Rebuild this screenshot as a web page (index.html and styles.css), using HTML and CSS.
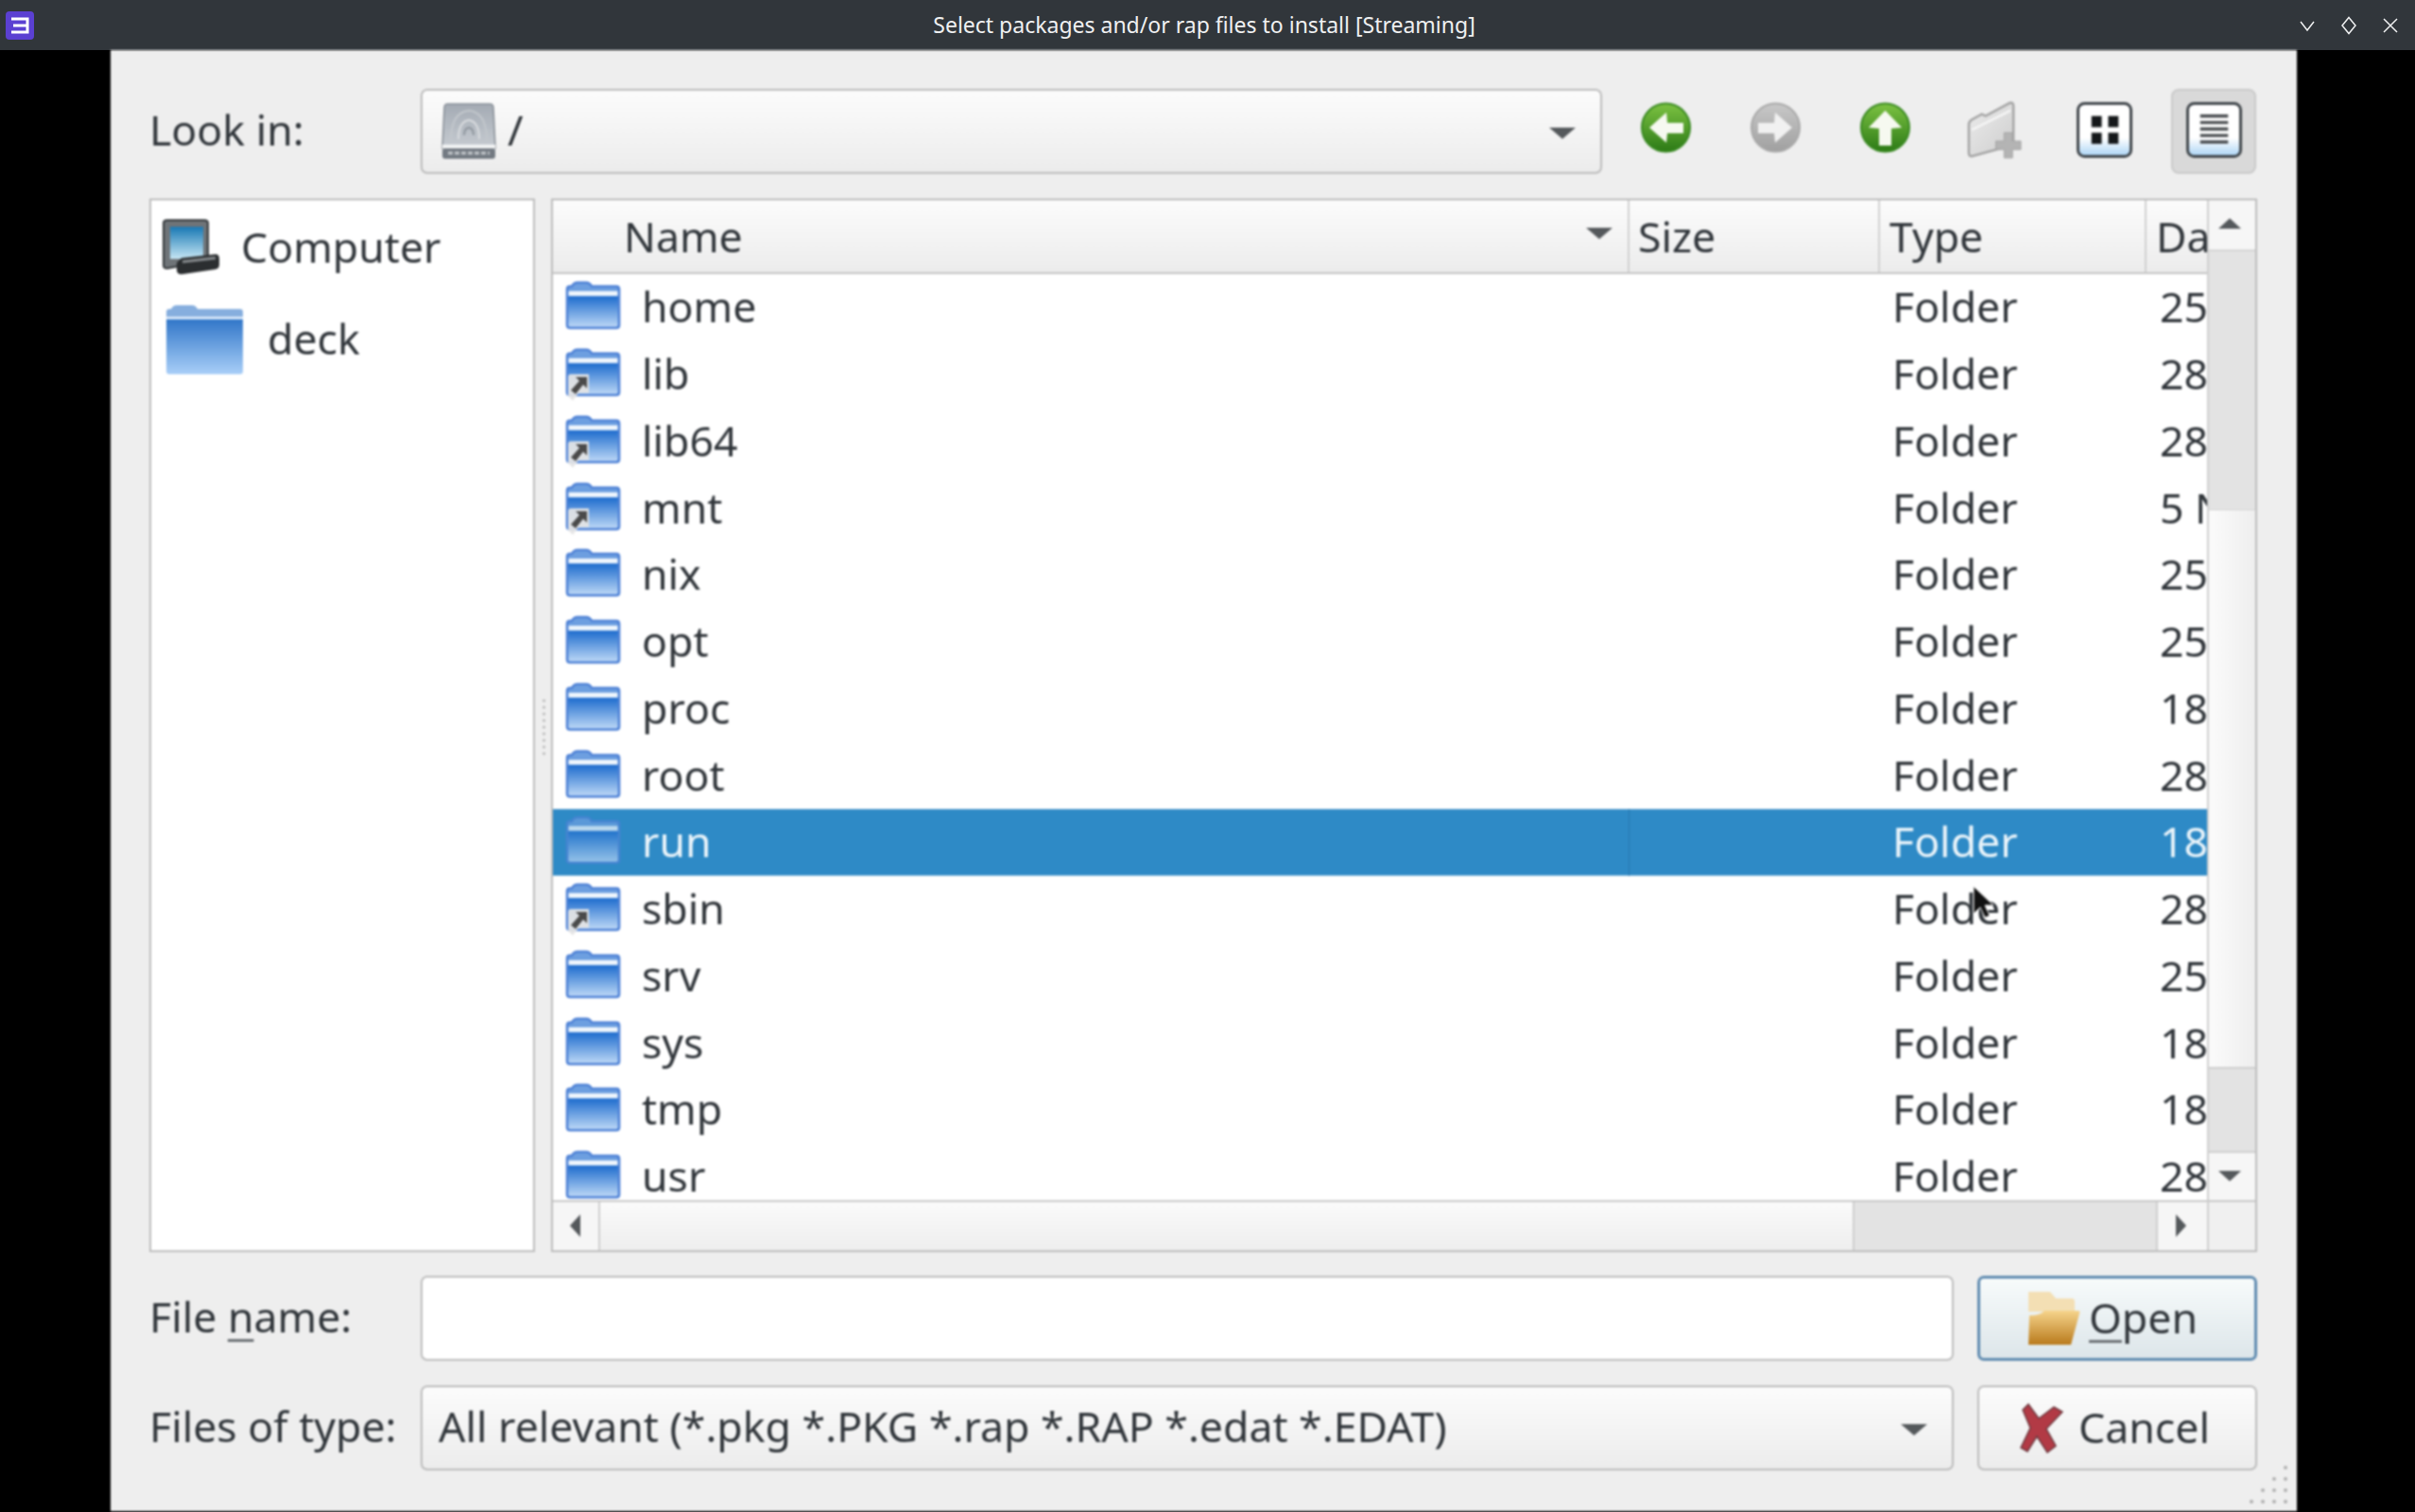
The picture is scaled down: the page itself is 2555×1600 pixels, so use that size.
FILE: index.html
```html
<!DOCTYPE html>
<html lang="en">

<head>
    <meta http-equiv="Content-Type" content="text/html; charset=utf-8" />
    <title>Select packages and/or rap files to install [Streaming]</title>
    <link rel="stylesheet" href="styles.css">
</head>

<body>
    <svg class="defs" width="0" height="0" aria-hidden="true">
        <defs>
            <linearGradient id="foldFill" x1="0" y1="0" x2="0" y2="1">
                <stop offset="0" stop-color="#6d9fe0" />
                <stop offset="0.3" stop-color="#6d9fe0" />
                <stop offset="0.31" stop-color="#1f6dce" />
                <stop offset="1" stop-color="#c0daf7" />
            </linearGradient>
            <linearGradient id="deckFill" x1="0" y1="0" x2="0" y2="1">
                <stop offset="0" stop-color="#86aede" />
                <stop offset="0.16" stop-color="#86aede" />
                <stop offset="0.17" stop-color="#d6e6f8" />
                <stop offset="0.2" stop-color="#d6e6f8" />
                <stop offset="0.21" stop-color="#3277c9" />
                <stop offset="1" stop-color="#a9cff8" />
            </linearGradient>
            <linearGradient id="greenFill" x1="0" y1="0" x2="0" y2="1">
                <stop offset="0" stop-color="#7cc242" />
                <stop offset="1" stop-color="#2c7a16" />
            </linearGradient>
            <linearGradient id="greyFill" x1="0" y1="0" x2="0" y2="1">
                <stop offset="0" stop-color="#c8c8c8" />
                <stop offset="1" stop-color="#a0a0a0" />
            </linearGradient>
            <linearGradient id="viewFill" x1="0" y1="0" x2="0" y2="1">
                <stop offset="0" stop-color="#ffffff" />
                <stop offset="0.65" stop-color="#ffffff" />
                <stop offset="1" stop-color="#a9d3f5" />
            </linearGradient>
            <linearGradient id="hddFill" x1="0" y1="0" x2="0" y2="1">
                <stop offset="0" stop-color="#a4abb4" />
                <stop offset="1" stop-color="#c6cbd1" />
            </linearGradient>
            <linearGradient id="screenFill" x1="0" y1="0" x2="0" y2="1">
                <stop offset="0" stop-color="#1878b4" />
                <stop offset="1" stop-color="#c6e6f4" />
            </linearGradient>
            <linearGradient id="newFolderFill" x1="0" y1="0" x2="1" y2="1">
                <stop offset="0" stop-color="#ececec" />
                <stop offset="1" stop-color="#cdcdcd" />
            </linearGradient>
            <linearGradient id="openFill" x1="0" y1="0" x2="0" y2="1">
                <stop offset="0" stop-color="#f6d48c" />
                <stop offset="1" stop-color="#b97a1c" />
            </linearGradient>
            <g id="folder">
                <path d="M2 8 Q2 5 5 5 H7 Q9 1 13 1 H22 Q26 1 28 5 H54 Q57 5 57 8 V46 Q57 49 54 49 H5 Q2 49 2 46 Z"
                    fill="url(#foldFill)" stroke="#4f82d6" stroke-width="2.6" />
                <rect x="3.5" y="10" width="52" height="5" fill="#eef5fc" />
            </g>
            <g id="linkBadge">
                <path d="M6 27 H25 V47 H14 L8 55 L3 50 V30 Q3 27 6 27 Z" fill="#e4e4e4" opacity="0.92" />
                <path d="M11 30 H23 V42 L19 38 L11 48 L6 44 L15 34 Z" fill="#4a4a4a" />
            </g>
        </defs>
    </svg>

    <div class="titlebar">
        <div class="titlebar-left">
            <svg class="appicon" viewBox="0 0 30 30">
                <rect width="30" height="30" rx="4" fill="#5b40d2" />
                <path d="M6 8 H23 V22 H6 M8 15 H23" fill="none" stroke="#fff" stroke-width="3" />
            </svg>
        </div>
        <div class="titletext">Select packages and/or rap files to install [Streaming]</div>
        <div class="winbtns">
            <svg viewBox="0 0 20 20"><path d="M3 6 L10 15 L17 6" /></svg>
            <svg viewBox="0 0 20 20"><path d="M10 1.5 L17 10 L10 18.5 L3 10 Z" /></svg>
            <svg viewBox="0 0 20 20"><path d="M3 3 L17 17 M17 3 L3 17" /></svg>
        </div>
    </div>

    <div class="stage">
        <div class="dialog">
            <div class="toprow">
                <label class="formlabel">Look in:</label>
                <div class="combo lookin">
                    <svg class="hdd" viewBox="0 0 58 60">
                        <path d="M7 1 H51 Q55 1 55 5 L57 48 H1 L3 5 Q3 1 7 1 Z" fill="url(#hddFill)" stroke="#878e96" stroke-width="1.5" />
                        <path d="M10 40 Q10 10 29 8 Q48 10 48 40" fill="none" stroke="#c2c7cc" stroke-width="2" />
                        <path d="M18 38 Q18 20 29 18 Q40 20 40 38" fill="none" stroke="#d8dbde" stroke-width="2" />
                        <path d="M24 34 Q24 27 29 26 Q34 27 34 34" fill="none" stroke="#8f969e" stroke-width="2" />
                        <rect x="1" y="44" width="56" height="4" fill="#f2f3f4" />
                        <rect x="1" y="48" width="56" height="11" rx="3" fill="#737a82" />
                        <path d="M7 53 H51" stroke="#c4c8cb" stroke-width="3" stroke-dasharray="5 2" />
                    </svg>
                    <span class="combotext">/</span>
                    <span class="arrow-down"></span>
                </div>
                <div class="toolbar">
                    <div class="toolbtn">
                        <svg viewBox="0 0 59 59">
                            <circle cx="29.5" cy="27" r="25.5" fill="url(#greenFill)" stroke="#3a8a22" stroke-width="2" />
                            <path d="M30 11 L12 27 L30 43 L31 33 H48 V22 H31 Z" fill="#f6f9f0" />
                        </svg>
                    </div>
                    <div class="toolbtn">
                        <svg viewBox="0 0 59 59">
                            <circle cx="29.5" cy="27" r="25.5" fill="url(#greyFill)" stroke="#a9a9a9" stroke-width="2" />
                            <path d="M29 11 L47 27 L29 43 L28 33 H11 V22 H28 Z" fill="#f1f1f1" />
                        </svg>
                    </div>
                    <div class="toolbtn">
                        <svg viewBox="0 0 59 59">
                            <circle cx="29.5" cy="27" r="25.5" fill="url(#greenFill)" stroke="#3a8a22" stroke-width="2" />
                            <path d="M29.5 9 L47 27 L36 28 V46 H23 V28 L12 27 Z" fill="#f6f9f0" />
                        </svg>
                    </div>
                    <div class="toolbtn">
                        <svg viewBox="0 0 60 60">
                            <path d="M2 24 Q2 21 5 19 L16 13 L20 15 L46 1 Q50 0 50 4 V44 L36 50 L6 58 Q2 59 2 55 Z" fill="url(#newFolderFill)" stroke="#a2a2a2" stroke-width="2.4" />
                            <path d="M5 30 L47 9" stroke="#f6f6f6" stroke-width="2.5" />
                            <path d="M40 33 H49 V42 H58 V51 H49 V60 H40 V51 H31 V42 H40 Z" fill="#b4b4b4" stroke="#a4a4a4" stroke-linejoin="round" />
                        </svg>
                    </div>
                    <div class="toolbtn">
                        <svg viewBox="0 0 60 60">
                            <rect x="1.5" y="1.5" width="57" height="57" rx="7" fill="url(#viewFill)" stroke="#3f454a" stroke-width="3" />
                            <rect x="16" y="15" width="11" height="12" fill="#15181a" />
                            <rect x="34" y="15" width="11" height="12" fill="#15181a" />
                            <rect x="16" y="33" width="11" height="12" fill="#15181a" />
                            <rect x="34" y="33" width="11" height="12" fill="#15181a" />
                        </svg>
                    </div>
                    <div class="toolbtn active">
                        <svg viewBox="0 0 60 60">
                            <rect x="1.5" y="1.5" width="57" height="57" rx="7" fill="url(#viewFill)" stroke="#3f454a" stroke-width="3" />
                            <path d="M15 15 H45 M15 22 H45 M15 29 H45 M15 36 H45 M15 43 H45" stroke="#4c4f52" stroke-width="3.4" />
                        </svg>
                    </div>
                </div>
            </div>

            <div class="middle">
                <div class="places pane">
                    <div class="place place-computer">
                        <svg class="computer" viewBox="0 0 60 60">
                            <path d="M1 4 Q1 1 5 1 H44 Q48 1 48 4 V44 L5 52 Q1 52 1 49 Z" fill="#6f7478" stroke="#33373a" stroke-width="2" />
                            <rect x="8" y="8" width="35" height="34" fill="url(#screenFill)" />
                            <path d="M15 46 L20 41 L56 37 Q60 37 60 42 V48 Q60 52 56 53 L22 58 Q15 59 15 54 Z" fill="#2b2e30" />
                            <path d="M21 45 L56 41" stroke="#85898c" stroke-width="3" />
                        </svg>
                        <span>Computer</span>
                    </div>
                    <div class="place place-deck">
                        <svg class="deck" viewBox="0 0 83 74">
                            <path d="M1 8 Q1 5 4 5 H6 Q8 1 12 1 H28 Q32 1 34 5 H79 Q82 5 82 8 V71 Q82 74 79 74 H4 Q1 74 1 71 Z" fill="url(#deckFill)" />
                        </svg>
                        <span>deck</span>
                    </div>
                </div>
                <div class="splitter"><span class="splitter-dots"></span></div>
                <div class="files pane">
                    <div class="filemain">
                        <div class="header">
                            <div class="hcell hname">Name<span class="sort-arrow"></span></div>
                            <div class="hcell hsize">Size</div>
                            <div class="hcell htype">Type</div>
                            <div class="hcell hdate">Da</div>
                        </div>
                        <div class="rows">
                            <div class="row"><div class="cname"><svg class="ficon" viewBox="0 0 59 51"><use href="#folder" /></svg>home</div><div class="csize"></div><div class="ctype">Folder</div><div class="cdate">25</div></div>
                            <div class="row"><div class="cname"><svg class="ficon" viewBox="0 0 59 51"><use href="#folder" /><use href="#linkBadge" /></svg>lib</div><div class="csize"></div><div class="ctype">Folder</div><div class="cdate">28</div></div>
                            <div class="row"><div class="cname"><svg class="ficon" viewBox="0 0 59 51"><use href="#folder" /><use href="#linkBadge" /></svg>lib64</div><div class="csize"></div><div class="ctype">Folder</div><div class="cdate">28</div></div>
                            <div class="row"><div class="cname"><svg class="ficon" viewBox="0 0 59 51"><use href="#folder" /><use href="#linkBadge" /></svg>mnt</div><div class="csize"></div><div class="ctype">Folder</div><div class="cdate">5 N</div></div>
                            <div class="row"><div class="cname"><svg class="ficon" viewBox="0 0 59 51"><use href="#folder" /></svg>nix</div><div class="csize"></div><div class="ctype">Folder</div><div class="cdate">25</div></div>
                            <div class="row"><div class="cname"><svg class="ficon" viewBox="0 0 59 51"><use href="#folder" /></svg>opt</div><div class="csize"></div><div class="ctype">Folder</div><div class="cdate">25</div></div>
                            <div class="row"><div class="cname"><svg class="ficon" viewBox="0 0 59 51"><use href="#folder" /></svg>proc</div><div class="csize"></div><div class="ctype">Folder</div><div class="cdate">18</div></div>
                            <div class="row"><div class="cname"><svg class="ficon" viewBox="0 0 59 51"><use href="#folder" /></svg>root</div><div class="csize"></div><div class="ctype">Folder</div><div class="cdate">28</div></div>
                            <div class="row selected"><div class="cname"><svg class="ficon" viewBox="0 0 59 51"><use href="#folder" /></svg>run</div><div class="csize"></div><div class="ctype">Folder</div><div class="cdate">18</div></div>
                            <div class="row"><div class="cname"><svg class="ficon" viewBox="0 0 59 51"><use href="#folder" /><use href="#linkBadge" /></svg>sbin</div><div class="csize"></div><div class="ctype">Folder</div><div class="cdate">28</div></div>
                            <div class="row"><div class="cname"><svg class="ficon" viewBox="0 0 59 51"><use href="#folder" /></svg>srv</div><div class="csize"></div><div class="ctype">Folder</div><div class="cdate">25</div></div>
                            <div class="row"><div class="cname"><svg class="ficon" viewBox="0 0 59 51"><use href="#folder" /></svg>sys</div><div class="csize"></div><div class="ctype">Folder</div><div class="cdate">18</div></div>
                            <div class="row"><div class="cname"><svg class="ficon" viewBox="0 0 59 51"><use href="#folder" /></svg>tmp</div><div class="csize"></div><div class="ctype">Folder</div><div class="cdate">18</div></div>
                            <div class="row"><div class="cname"><svg class="ficon" viewBox="0 0 59 51"><use href="#folder" /></svg>usr</div><div class="csize"></div><div class="ctype">Folder</div><div class="cdate">28</div></div>
                        </div>
                    </div>
                    <div class="vbar">
                        <div class="sbtn vup"><span class="tri-up"></span></div>
                        <div class="trough t1"></div>
                        <div class="vthumb"></div>
                        <div class="trough t2"></div>
                        <div class="sbtn vdown"><span class="tri-down"></span></div>
                    </div>
                    <div class="hbar">
                        <div class="sbtn hleft"><span class="tri-left"></span></div>
                        <div class="hthumb"></div>
                        <div class="trough t3"></div>
                        <div class="sbtn hright"><span class="tri-right"></span></div>
                    </div>
                    <div class="corner"></div>
                </div>
            </div>

            <div class="formrow">
                <label class="formlabel">File <u>n</u>ame:</label>
                <div class="lineedit"></div>
                <div class="button default">
                    <svg class="btnicon" viewBox="0 0 56 58">
                        <path d="M1 1 H24 L30 8 H47 Q50 8 50 12 V22 H1 Z" fill="#f3dfb4" />
                        <path d="M2 26 Q14 26 18 21 H54 Q56 21 55 24 L46 57 H1 Z" fill="url(#openFill)" />
                    </svg>
                    <span class="btntext"><u>O</u>pen</span>
                </div>
            </div>

            <div class="formrow lastrow">
                <label class="formlabel">Files of type:</label>
                <div class="combo filetype">
                    <span class="combotext">All relevant (*.pkg *.PKG *.rap *.RAP *.edat *.EDAT)</span>
                    <span class="arrow-down"></span>
                </div>
                <div class="button cancel">
                    <svg class="btnicon cancelicon" viewBox="0 0 46 54">
                        <path d="M9 2 L20 17 L36 5 L45 10 L28 28 L38 46 L29 53 L18 36 L8 52 L1 48 L11 27 L3 8 Z" fill="#b23a45" stroke="#6e3a40" stroke-width="1.5" />
                    </svg>
                    <span class="btntext">Cancel</span>
                </div>
            </div>

            <span class="sizegrip"></span>
            <svg class="pointer" viewBox="0 0 24 36">
                <path d="M2 1 V30 L9 23 L14 34 L19 32 L14 21 H23 Z" fill="#111" stroke="#e8e8e8" stroke-width="1" />
            </svg>
        </div>
    </div>
</body>

</html>
```

FILE: styles.css
```css
html,
body {
    margin: 0;
    padding: 0;
    background: #000;
    overflow: hidden;
}

body {
    width: 2555px;
    height: 1600px;
    display: flex;
    flex-direction: column;
    font-family: "Noto Sans", "Open Sans", sans-serif;
    font-size: 44.6px;
    color: #31363b;
}

.defs {
    display: block;
    flex: none;
}

/* window title */
.titlebar {
    height: 53px;
    flex: none;
    background: #31363b;
    display: grid;
    grid-template-columns: 1fr auto 1fr;
    align-items: center;
}

.titlebar-left {
    display: flex;
    padding-left: 6px;
}

.appicon {
    width: 30px;
    height: 30px;
}

.titletext {
    color: #eff0f1;
    font-size: 23px;
    margin-left: -7px;
    padding-bottom: 2px;
}

.winbtns {
    display: flex;
    justify-content: flex-end;
    gap: 24px;
    padding-right: 16px;
}

.winbtns svg {
    width: 20px;
    height: 20px;
}

.winbtns path {
    fill: none;
    stroke: #eff0f1;
    stroke-width: 1.5;
}

/* dialog */
.stage {
    flex: 1;
    display: flex;
    padding-left: 117px;
    min-height: 0;
}

.dialog {
    position: relative;
    width: 2313px;
    height: 1546px;
    box-sizing: border-box;
    padding: 41px 42px 0 41px;
    background: #eeeeee;
    filter: blur(0.8px);
}

.toprow,
.formrow {
    display: flex;
    align-items: stretch;
    height: 90px;
}

.formrow {
    margin-top: 25px;
}

.lastrow {
    margin-top: 26px;
}

.formlabel {
    width: 287px;
    flex: none;
    display: flex;
    align-items: center;
    white-space: pre;
    padding-bottom: 5px;
    box-sizing: border-box;
}

.formlabel u,
.button u {
    text-underline-offset: 7px;
    text-decoration-thickness: 3px;
    text-decoration-color: #6b7074;
}

.combo {
    position: relative;
    box-sizing: border-box;
    display: flex;
    align-items: center;
    border: 2px solid #bcbcbc;
    border-radius: 7px;
    background: linear-gradient(#fcfcfc, #ececec);
}

.lookin {
    width: 1250px;
    flex: none;
}

.hdd {
    width: 58px;
    height: 60px;
    margin-left: 20px;
    margin-right: 12px;
}

.filetype {
    width: 1622px;
    flex: none;
    padding-left: 17px;
}

.combotext {
    white-space: nowrap;
    padding-bottom: 5px;
}

.arrow-down {
    position: absolute;
    right: 26px;
    top: 39px;
    border-left: 14px solid transparent;
    border-right: 14px solid transparent;
    border-top: 12px solid #55595c;
}

.toolbar {
    flex: 1;
    display: flex;
    justify-content: flex-end;
    gap: 26px;
    padding-right: 1px;
}

.toolbtn {
    width: 90px;
    height: 90px;
    box-sizing: border-box;
    display: flex;
    align-items: center;
    justify-content: center;
    border: 2px solid transparent;
    border-radius: 8px;
}

.toolbtn svg {
    width: 59px;
    height: 59px;
    margin-bottom: 3px;
    overflow: visible;
}

.toolbtn.active {
    background: #d9d9d9;
    border-color: #cacaca;
}

/* panes */
.middle {
    display: flex;
    height: 1115px;
    margin-top: 26px;
}

.pane {
    box-sizing: border-box;
    border: 2px solid #bdbdbd;
    background: #fff;
}

.places {
    width: 408px;
    flex: none;
}

.place {
    display: flex;
    align-items: center;
    white-space: nowrap;
}

.place span {
    padding-bottom: 3px;
}

.place-computer {
    height: 100px;
    padding: 0 0 0 12px;
}

.computer {
    width: 60px;
    height: 60px;
    margin-right: 23px;
}

.place-deck {
    height: 94px;
    padding-left: 15px;
}

.deck {
    width: 83px;
    height: 74px;
    margin-right: 25px;
}

.splitter {
    width: 17px;
    flex: none;
    display: flex;
    align-items: center;
    justify-content: center;
}

.splitter-dots {
    width: 3px;
    height: 60px;
    margin-left: 1px;
    margin-top: 5px;
    background: repeating-linear-gradient(#c6c6c6 0 3px, transparent 3px 7px);
}

.files {
    flex: 1;
    display: grid;
    grid-template-columns: 1750px 1fr;
    grid-template-rows: 1058px 1fr;
    min-width: 0;
}

.filemain {
    overflow: hidden;
    min-width: 0;
}

.header {
    height: 78px;
    box-sizing: border-box;
    display: grid;
    grid-template-columns: 1139px 265px 282px 64px;
    border-bottom: 2px solid #c4c4c4;
    background: linear-gradient(#fcfcfc, #ececec);
}

.hcell {
    position: relative;
    display: flex;
    align-items: center;
    padding-left: 10px;
    padding-bottom: 2px;
    border-right: 2px solid #d0d0d0;
    overflow: hidden;
    white-space: nowrap;
}

.hname {
    padding-left: 75px;
}

.hsize {
    padding-left: 9px;
}

.hdate {
    border-right: 0;
}

.sort-arrow {
    position: absolute;
    right: 16px;
    top: 29px;
    border-left: 14px solid transparent;
    border-right: 14px solid transparent;
    border-top: 12px solid #55595c;
}

.rows {
    display: grid;
    grid-auto-rows: 70.75px;
}

.row {
    display: grid;
    grid-template-columns: 1139px 265px 282px 64px;
    align-items: center;
    white-space: nowrap;
}

.row > div {
    padding-bottom: 3px;
}

.cname {
    display: flex;
    align-items: center;
    padding-left: 13px;
}

.ficon {
    width: 59px;
    height: 51px;
    margin-right: 22px;
    overflow: visible;
}

.ctype {
    padding-left: 13px;
}

.cdate {
    padding-left: 14px;
    overflow: hidden;
}

.row.selected {
    background: #2e8ac6;
    color: #eaf4fa;
    box-shadow: inset 0 1px 0 #5b9fcf, inset 0 -1px 0 #8fbfdf;
}

.row.selected .cname {
    align-self: stretch;
    border-right: 1px solid #2877ad;
}

.row.selected .ficon {
    opacity: 0.72;
}

/* scrollbars */
.vbar {
    display: flex;
    flex-direction: column;
    border-left: 2px solid #cfcfcf;
    background: #f4f4f4;
}

.sbtn {
    flex: none;
    display: flex;
    align-items: center;
    justify-content: center;
    background: #f6f6f6;
}

.vup {
    height: 52px;
    padding-right: 5px;
    padding-bottom: 3px;
    box-sizing: border-box;
}

.vdown {
    height: 50px;
    padding-right: 5px;
    padding-bottom: 2px;
    box-sizing: border-box;
}

.trough {
    background: #e3e3e3;
}

.t1 {
    height: 275px;
    border-top: 2px solid #d4d4d4;
    box-sizing: border-box;
}

.vthumb {
    height: 590px;
    background: linear-gradient(90deg, #fbfbfb, #eeeeee);
    border-top: 1px solid #d4d4d4;
    box-sizing: border-box;
}

.t2 {
    flex: 1;
    border-top: 2px solid #cfcfcf;
    border-bottom: 2px solid #cfcfcf;
}

.hbar {
    display: flex;
    border-top: 2px solid #c8c8c8;
}

.hleft {
    width: 50px;
    border-right: 2px solid #cfcfcf;
    padding-bottom: 2px;
    padding-right: 2px;
    box-sizing: border-box;
}

.hthumb {
    width: 1325px;
    background: linear-gradient(#fbfbfb, #eeeeee);
}

.t3 {
    flex: 1;
    border-left: 2px solid #cfcfcf;
    border-right: 2px solid #cfcfcf;
}

.hright {
    width: 52px;
    padding-bottom: 2px;
    padding-right: 3px;
    box-sizing: border-box;
}

.corner {
    border-left: 2px solid #cfcfcf;
    border-top: 2px solid #c8c8c8;
    background: #f0f0f0;
}

.tri-up,
.tri-down {
    border-left: 12px solid transparent;
    border-right: 12px solid transparent;
}

.tri-up {
    border-bottom: 11px solid #55595c;
}

.tri-down {
    border-top: 11px solid #55595c;
}

.tri-left,
.tri-right {
    border-top: 12px solid transparent;
    border-bottom: 12px solid transparent;
}

.tri-left {
    border-right: 11px solid #55595c;
}

.tri-right {
    border-left: 11px solid #55595c;
}

/* file name and buttons */
.lineedit {
    width: 1622px;
    flex: none;
    box-sizing: border-box;
    border: 2px solid #bdbdbd;
    border-radius: 7px;
    background: #fff;
}

.button {
    width: 296px;
    flex: none;
    margin-left: 25px;
    box-sizing: border-box;
    display: flex;
    align-items: center;
    justify-content: center;
    gap: 9px;
    padding-right: 10px;
    border: 2px solid #bcbcbc;
    border-radius: 7px;
    background: linear-gradient(#fcfcfc, #ececec);
}

.btntext {
    padding-bottom: 3px;
}

.button.default {
    border: 3px solid #5f8bb0;
    background: linear-gradient(#f7fbfb, #dde6ea);
}

.button.cancel {
    padding-right: 5px;
}

.btnicon {
    width: 56px;
    height: 58px;
}

.cancelicon {
    width: 46px;
    height: 54px;
    margin-right: 7px;
}

/* overlays */
.sizegrip {
    position: absolute;
    right: 6px;
    bottom: 4px;
    width: 48px;
    height: 48px;
    background:
        radial-gradient(circle, #b4b4b4 1.8px, transparent 2.2px) 0 0 / 12px 12px;
    clip-path: polygon(100% -6px, 100% 100%, -6px 100%);
}

.pointer {
    position: absolute;
    left: 1969px;
    top: 884px;
    width: 24px;
    height: 36px;
}
```
